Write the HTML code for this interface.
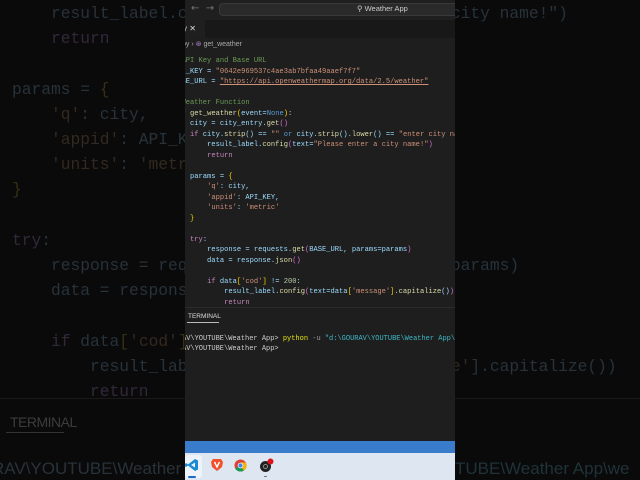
<!DOCTYPE html>
<html><head><meta charset="utf-8"><style>
*{margin:0;padding:0;box-sizing:border-box}
body{width:640px;height:480px;overflow:hidden;background:#0a0a0a;position:relative;font-family:"Liberation Mono",monospace}
pre{font-family:"Liberation Mono",monospace;white-space:pre;position:absolute}
.bg{left:-27px;top:1px;font-size:16.25px;line-height:25.2px;color:#27323a}
.bg .s{color:#33291f}.bg .k{color:#33283a}.bg .f{color:#333326}.bg .y{color:#363115}.bg .c{color:#1f3328}.bg .b{color:#1d2a36}
#panel{position:absolute;left:185px;top:0;width:270px;height:480px;background:#1e1e1e;overflow:hidden}
.code{left:-12px;top:56px;font-size:7.1px;line-height:10.5px;color:#9cdcfe}
.s{color:#ce9178}.k{color:#c586c0}.f{color:#dcdcaa}.y{color:#ffd700}.c{color:#6a9955}.b{color:#569cd6}.p{color:#da70d6}.n{color:#b5cea8}.w{color:#d4d4d4}
</style></head><body>
<pre class="bg">        result_label.config(text="Please enter a city name!")
        <span class="k">return</span>

    params = <span class="y">{</span>
        <span class="s">'q'</span>: city,
        <span class="s">'appid'</span>: API_KEY,
        <span class="s">'units'</span>: <span class="s">'metric'</span>
    <span class="y">}</span>

    <span class="k">try</span>:
        response = requests.get(BASE_URL, params=params)
        data = response.json()

        <span class="k">if</span> data<span class="y">[</span><span class="s">'cod'</span><span class="y">]</span> != 200:
            result_label.config(text=data[<span class="s">'message'</span>].capitalize())
            <span class="k">return</span></pre>
<div style="position:absolute;left:0;top:398px;width:640px;height:1px;background:#1a1a1a"></div>
<div style="position:absolute;left:10px;top:414px;font-family:'Liberation Sans',sans-serif;font-size:14px;color:#3c3c3c;letter-spacing:-0.5px">TERMINAL</div>
<div style="position:absolute;left:6px;top:432px;width:58px;height:1px;background:#333"></div>
<div style="position:absolute;left:-8px;top:459px;font-size:17px;color:#28323a;font-family:'Liberation Sans',sans-serif;white-space:nowrap">RAV\YOUTUBE\Weather</div>
<div style="position:absolute;left:455px;top:459px;font-size:17px;color:#1f333a;font-family:'Liberation Sans',sans-serif;white-space:nowrap">TUBE\Weather App\we</div>

<div id="panel">
 <div style="position:absolute;left:0;top:0;width:270px;height:20px;background:#1f1f1f"></div>
 <div style="position:absolute;left:6px;top:3px;color:#777;font-size:10px;font-family:'DejaVu Sans',sans-serif">←&nbsp;&nbsp;→</div>
 <div style="position:absolute;left:34px;top:3px;width:250px;height:13px;background:#2a2a2a;border:1px solid #3a3a3a;border-radius:4px"></div>
 <div style="position:absolute;left:172px;top:4px;font-family:'Liberation Sans',sans-serif;font-size:7.5px;color:#ccc">⚲ Weather App</div>
 <div style="position:absolute;left:0;top:20px;width:270px;height:18px;background:#181818"></div>
 <div style="position:absolute;left:0;top:20px;width:20px;height:18px;background:#1f1f1f"></div>
 <div style="position:absolute;left:-2px;top:24px;font-family:'Liberation Sans',sans-serif;font-size:8px;color:#ddd">y ✕</div>
 <div style="position:absolute;left:-3px;top:40px;font-family:'Liberation Sans',sans-serif;font-size:7px;color:#aaa">py › <span style="color:#b180d7">⊛</span> get_weather</div>
 <pre class="code"><span class="c"># API Key and Base URL</span>
API_KEY = <span class="s">"0642e969537c4ae3ab7bfaa49aaef7f7"</span>
BASE_URL = <span class="s" style="text-decoration:underline">"https://api.openweathermap.org/data/2.5/weather"</span>

<span class="c"># Weather Function</span>
<span class="b">def</span> <span class="f">get_weather</span><span class="y">(</span>event=<span class="b">None</span><span class="y">)</span>:
    city = city_entry.<span class="f">get</span><span class="p">()</span>
    <span class="k">if</span> city.<span class="f">strip</span>() == <span class="s">""</span> <span class="b">or</span> city.<span class="f">strip</span>().<span class="f">lower</span>() == <span class="s">"enter city name"</span>
        result_label.<span class="f">config</span><span class="p">(</span>text=<span class="s">"Please enter a city name!"</span><span class="p">)</span>
        <span class="k">return</span>

    params = <span class="y">{</span>
        <span class="s">'q'</span>: city,
        <span class="s">'appid'</span>: API_KEY,
        <span class="s">'units'</span>: <span class="s">'metric'</span>
    <span class="y">}</span>

    <span class="k">try</span>:
        response = requests.<span class="f">get</span><span class="p">(</span>BASE_URL, params=params<span class="p">)</span>
        data = response.<span class="f">json</span><span class="p">()</span>

        <span class="k">if</span> data<span class="y">[</span><span class="s">'cod'</span><span class="y">]</span> != <span class="n">200</span>:
            result_label.<span class="f">config</span><span class="p">(</span>text=data<span class="y">[</span><span class="s">'message'</span><span class="y">]</span>.<span class="f">capitalize</span>()<span class="p">)</span>
            <span class="k">return</span></pre>
 <div style="position:absolute;left:0;top:307px;width:270px;height:1px;background:#2b2b2b"></div>
 <div style="position:absolute;left:3px;top:313px;font-family:'Liberation Sans',sans-serif;font-size:6.5px;color:#ddd">TERMINAL</div>
 <div style="position:absolute;left:2px;top:322px;width:32px;height:1px;background:#bbb"></div>
 <pre style="left:-3px;top:334px;font-size:7px;line-height:10px;color:#ccc">AV\YOUTUBE\Weather App&gt; <span style="color:#e5e510">python</span> <span style="color:#999">-u</span> <span style="color:#3fb7c6">"d:\GOURAV\YOUTUBE\Weather App\weather.py"</span>
AV\YOUTUBE\Weather App&gt;</pre>
 <div style="position:absolute;left:0;top:441px;width:270px;height:12px;background:#3a7ccc"></div>
 <div style="position:absolute;left:0;top:453px;width:270px;height:27px;background:#dde6f1"></div>
 <div style="position:absolute;left:0;top:455px;width:17px;height:23px;background:#eef3f9;border-radius:3px"></div>
 <svg style="position:absolute;left:0;top:458px" width="14" height="14" viewBox="0 0 14 14"><path d="M10 1 L13 2.5 V11.5 L10 13 L3 7.5 L1 9 L0 8 V6 L1 5 L3 6.5 Z M10 4.5 L6 7 L10 9.5 Z" fill="#1a8ad4"/></svg>
 <div style="position:absolute;left:3px;top:476px;width:8px;height:2px;background:#1a6cc8;border-radius:1px"></div>
 <svg style="position:absolute;left:26px;top:458px" width="12" height="14" viewBox="0 0 12 14"><path d="M2 1 H10 L12 4 L11 9 L6 13 L1 9 L0 4 Z" fill="#f0502a"/><path d="M3.5 4 L6 9 L8.5 4" stroke="#fff" stroke-width="1.4" fill="none"/></svg>
 <svg style="position:absolute;left:49px;top:459px" width="13" height="13" viewBox="0 0 14 14"><circle cx="7" cy="7" r="6.5" fill="#db4437"/><path d="M7 7 L1.4 10.2 A6.5 6.5 0 0 0 10.5 12.5 Z" fill="#0f9d58"/><path d="M7 7 L10.5 12.5 A6.5 6.5 0 0 0 12.6 3.8 L7 3.8 Z" fill="#f4b400"/><circle cx="7" cy="7" r="3" fill="#fff"/><circle cx="7" cy="7" r="2.3" fill="#4285f4"/></svg>
 <svg style="position:absolute;left:74px;top:458px" width="16" height="16" viewBox="0 0 16 16"><circle cx="6.5" cy="8.5" r="5.5" fill="#222"/><circle cx="6.5" cy="8.5" r="2" fill="none" stroke="#aaa" stroke-width="0.8"/><circle cx="11.5" cy="3.5" r="3" fill="#e0101a"/></svg>
 <div style="position:absolute;left:79px;top:476px;width:3px;height:1px;background:#777"></div>
</div>
</body></html>
